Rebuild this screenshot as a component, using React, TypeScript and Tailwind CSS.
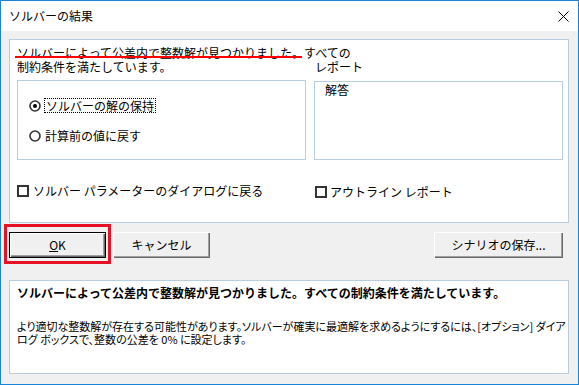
import React from 'react'

const font = { fontFamily: '"Noto Sans CJK JP", "Noto Sans", sans-serif' }

const Radio = ({ checked }: { checked?: boolean }) => (
  <svg width="12" height="12" viewBox="0 0 12 12" className="shrink-0">
    <circle cx="6" cy="6" r="5" fill="#fff" stroke="#333" strokeWidth="1.6" />
    {checked && <circle cx="6" cy="6" r="2" fill="#000" />}
  </svg>
)

const Checkbox = () => (
  <div className="h-[12px] w-[12px] shrink-0 border-2 border-[#333] bg-white" />
)

const Button = ({ children, isDefault }: { children: React.ReactNode; isDefault?: boolean }) => (
  <button
    className={
      'flex h-[26px] w-full items-center justify-center bg-[#f0f0f0] text-[12px] text-black ' +
      (isDefault
        ? 'border border-black shadow-[inset_1px_1px_#fff,inset_-1px_-1px_#696969,inset_-2px_-2px_#a0a0a0]'
        : 'shadow-[inset_1px_1px_#fff,inset_-1px_-1px_#696969,inset_-2px_-2px_#a0a0a0]')
    }
  >
    {children}
  </button>
)

export default function App() {
  return (
    <div
      className="flex h-[385px] w-[579px] flex-col border border-[#1883d7] bg-[#f0f0f0] text-[12px] leading-[14px] text-black"
      style={font}
    >
      {/* title bar */}
      <div className="flex h-[30px] shrink-0 items-center justify-between bg-white pl-[8px] pr-[9px]">
        <span className="text-[12px]">ソルバーの結果</span>
        <svg width="11" height="11" viewBox="0 0 11 11">
          <path d="M0.5 0.5 L10.5 10.5 M10.5 0.5 L0.5 10.5" stroke="#000" strokeWidth="1" />
        </svg>
      </div>

      <div className="flex flex-col pl-[8px] pr-[9px] pt-[8px]">
        {/* result panel */}
        <div className="flex h-[184px] flex-col border border-[#b9cde0] bg-white pl-[7px] pr-[5px] pt-[6px]">
          <div className="whitespace-nowrap">
            <span className="relative">
              ソルバーによって公差内で整数解が見つかりました。
              <span className="absolute left-[-2px] right-[2px] top-[12px] h-[1.5px] bg-[#ff0000]" />
            </span>
            すべての
          </div>
          <div className="flex whitespace-nowrap">
            <div className="w-[298px]">制約条件を満たしています。</div>
            <div>レポート</div>
          </div>

          <div className="mt-[6px] flex gap-[8px]">
            <div className="flex h-[80px] w-[289px] flex-col border border-[#b9cde0] pl-[11px] pt-[17px]">
              <div className="flex items-center gap-[3px]">
                <Radio checked />
                <span className="border border-dotted border-black px-[1px] leading-[13px]">ソルバーの解の保持</span>
              </div>
              <div className="mt-[16px] flex items-center gap-[4px]">
                <Radio />
                <span>計算前の値に戻す</span>
              </div>
            </div>
            <div className="mt-[1px] h-[79px] w-[249px] border border-[#b9cde0] pl-[10px] pt-[1px]">解答</div>
          </div>

          <div className="flex">
            <div className="mt-[22px] flex w-[298px] items-center gap-[4px]">
              <Checkbox />
              <span>ソルバー パラメーターのダイアログに戻る</span>
            </div>
            <div className="mt-[25px] flex items-center gap-[3px]">
              <Checkbox />
              <span>アウトライン レポート</span>
            </div>
          </div>
        </div>

        {/* buttons */}
        <div className="mt-[9px] flex items-center pr-[6px]">
          <div className="relative w-[97px]">
            <Button isDefault>
              <span>
                <span className="underline">O</span>K
              </span>
            </Button>
            <div className="absolute -bottom-[6px] -left-[5px] -right-[5px] -top-[8px] border-[3px] border-[#e81123]" />
          </div>
          <div className="ml-[7px] w-[97px]">
            <Button>キャンセル</Button>
          </div>
          <div className="ml-auto w-[129px]">
            <Button>シナリオの保存...</Button>
          </div>
        </div>

        {/* message panel */}
        <div className="mt-[22px] flex h-[94px] flex-col border border-[#b9cde0] bg-white pl-[7px] pt-[5px]">
          <div className="whitespace-nowrap font-bold leading-[14px]">
            ソルバーによって公差内で整数解が見つかりました。すべての制約条件を満たしています。
          </div>
          <div className="mt-[20px] whitespace-nowrap text-[11px] leading-[13px] [font-feature-settings:'palt']">
            より適切な整数解が存在する可能性があります。ソルバーが確実に最適解を求めるようにするには、[オプション] ダイア
          </div>
          <div className="whitespace-nowrap text-[11px] leading-[13px] [font-feature-settings:'palt']">
            ログ ボックスで、整数の公差を 0% に設定します。
          </div>
        </div>
      </div>
    </div>
  )
}
